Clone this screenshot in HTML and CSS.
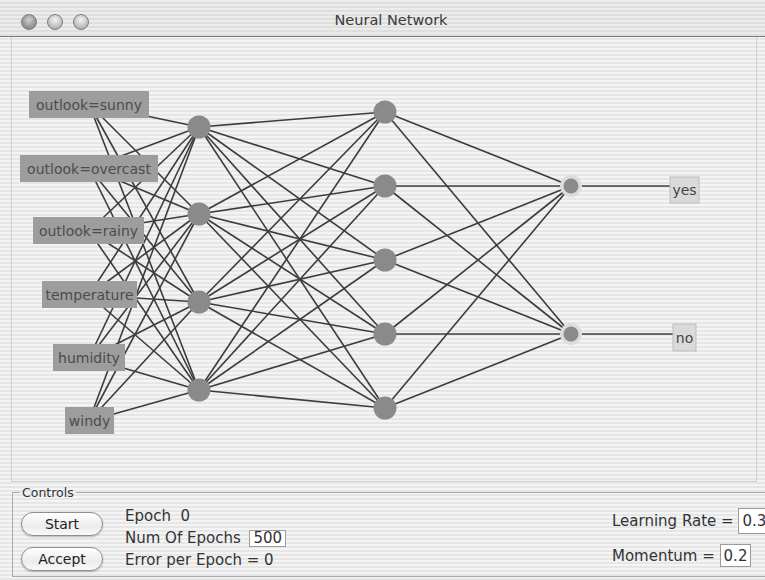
FILE: index.html
```html
<!DOCTYPE html>
<html lang="en">
<head>
    <meta charset="UTF-8">
    <title>Neural Network</title>
    <link rel="stylesheet" href="styles.css">
</head>
<body>
    <div class="window">
        <header class="titlebar">
            <div class="lights">
                <span class="light close"></span>
                <span class="light"></span>
                <span class="light"></span>
            </div>
            <h1>Neural Network</h1>
        </header>

        <div class="network">
            <svg id="net" width="746" height="445" viewBox="11 37 746 445">
                <g id="edges"></g>
                <g id="nodes"></g>
                <g id="labels"></g>
            </svg>
        </div>

        <fieldset class="controls">
            <legend>Controls</legend>
            <div class="buttons">
                <button type="button">Start</button>
                <button type="button">Accept</button>
            </div>
            <div class="stats">
                <p>Epoch&nbsp; 0</p>
                <p>Num Of Epochs <input type="text" class="epochs" value="500"></p>
                <p>Error per Epoch = 0</p>
            </div>
            <div class="params">
                <p class="rate">Learning Rate = <input type="text" class="wide" value="0.3"></p>
                <p class="momentum">Momentum = <input type="text" class="small" value="0.2"></p>
            </div>
        </fieldset>
    </div>

    <script>
        const ns = 'http://www.w3.org/2000/svg';
        const inputs = [
            { name: 'outlook=sunny', y: 104, box: [28, 91, 120, 27] },
            { name: 'outlook=overcast', y: 168, box: [19, 155, 138, 27] },
            { name: 'outlook=rainy', y: 231, box: [32, 217, 111, 27] },
            { name: 'temperature', y: 295, box: [41, 281, 95, 27] },
            { name: 'humidity', y: 358, box: [52, 344, 72, 27] },
            { name: 'windy', y: 421, box: [64, 407, 49, 27] }
        ];
        const hidden1 = [127, 214, 302, 390];
        const hidden2 = [112, 186, 260, 334, 408];
        const outputs = [
            { name: 'yes', y: 186, box: [669, 177, 29, 26] },
            { name: 'no', y: 334, box: [672, 324, 23, 27] }
        ];

        function el(tag, attrs, parent) {
            const node = document.createElementNS(ns, tag);
            for (const key in attrs) node.setAttribute(key, attrs[key]);
            document.getElementById(parent).appendChild(node);
            return node;
        }

        function line(x1, y1, x2, y2) {
            el('line', { x1, y1, x2, y2, class: 'edge' }, 'edges');
        }

        inputs.forEach(i => hidden1.forEach(h => line(88, i.y, 198, h)));
        hidden1.forEach(a => hidden2.forEach(b => line(198, a, 384, b)));
        hidden2.forEach(a => outputs.forEach(o => line(384, a, 570, o.y)));
        outputs.forEach(o => line(570, o.y, o.box[0], o.y));

        hidden1.forEach(y => el('circle', { cx: 198, cy: y, r: 11.5, class: 'node' }, 'nodes'));
        hidden2.forEach(y => el('circle', { cx: 384, cy: y, r: 11.5, class: 'node' }, 'nodes'));
        outputs.forEach(o => {
            el('circle', { cx: 570, cy: o.y, r: 11, class: 'halo' }, 'nodes');
            el('circle', { cx: 570, cy: o.y, r: 7.5, class: 'node' }, 'nodes');
        });

        function label(item, cls) {
            const [x, y, w, h] = item.box;
            el('rect', { x, y, width: w, height: h, class: cls + '-box' }, 'labels');
            const t = el('text', { x: x + w / 2, y: y + h / 2 + 5, class: cls + '-text' }, 'labels');
            t.textContent = item.name;
        }

        inputs.forEach(i => label(i, 'in'));
        outputs.forEach(o => label(o, 'out'));
    </script>
</body>
</html>
```

FILE: styles.css
```css
html, body {
    margin: 0;
    width: 765px;
    height: 580px;
    overflow: hidden;
}

body {
    font-family: 'DejaVu Sans', sans-serif;
    color: #333;
    background: repeating-linear-gradient(#f4f4f4 0, #f4f4f4 2px, #e6e6e6 2px, #e6e6e6 4px);
}

.titlebar {
    position: relative;
    height: 36px;
    border-bottom: 1px solid #7a7a7a;
    background: repeating-linear-gradient(#ececec 0, #ececec 2px, #dedede 2px, #dedede 4px);
    display: flex;
    align-items: center;
    justify-content: center;
}

.lights {
    position: absolute;
    left: 21px;
    top: 14px;
    display: flex;
    gap: 10px;
}

.light {
    width: 14px;
    height: 14px;
    border-radius: 50%;
    border: 1px solid #7c7c7c;
    background: radial-gradient(circle at 50% 35%, #f4f4f4 0, #c4c4c4 55%, #9a9a9a 100%);
}

.light.close {
    background: radial-gradient(circle at 50% 35%, #d0d0d0 0, #9a9a9a 55%, #777 100%);
}

.titlebar h1 {
    margin: 4px 0 0 17px;
    font-size: 14.5px;
    font-weight: normal;
    color: #3a3a3a;
}

.network {
    margin-left: 11px;
    width: 744px;
    height: 444px;
    border-left: 1px solid #cfcfcf;
    border-right: 1px solid #cfcfcf;
    border-bottom: 1px solid #cfcfcf;
}

.network svg {
    display: block;
}

.edge {
    stroke: #3c3c3c;
    stroke-width: 1.6;
}

.node {
    fill: #8a8a8a;
}

.halo {
    fill: #dcdcdc;
}

.in-box {
    fill: #9d9d9d;
}

.in-text {
    font-family: 'DejaVu Sans', sans-serif;
    font-size: 14px;
    fill: #4c4c4c;
    text-anchor: middle;
}

.out-box {
    fill: #dadada;
    stroke: #bdbdbd;
}

.out-text {
    font-family: 'DejaVu Sans', sans-serif;
    font-size: 14px;
    fill: #444;
    text-anchor: middle;
}

.controls {
    margin: 3px -20px 0 12px;
    padding: 12px 0 0 8px;
    height: 78px;
    border: 1px solid #ababab;
    display: flex;
    font-size: 15px;
    color: #333;
}

.controls legend {
    margin-left: -1px;
    padding: 0 2px;
    font-size: 12.5px;
    color: #333;
}

.controls p {
    margin: 0;
}

.buttons {
    display: flex;
    flex-direction: column;
    gap: 11px;
    width: 82px;
}

.buttons button {
    height: 24px;
    border: 1px solid #8e8e8e;
    border-radius: 13px;
    background: linear-gradient(#ffffff, #ececec 60%, #f8f8f8);
    font-family: 'DejaVu Sans', sans-serif;
    font-size: 14px;
    color: #222;
    box-shadow: 0 1px 2px rgba(0, 0, 0, 0.25);
}

.stats {
    margin-left: 22px;
    display: flex;
    flex-direction: column;
    gap: 2px;
    margin-top: -6px;
}

.stats p {
    height: 20px;
    line-height: 20px;
}

input {
    font-family: 'DejaVu Sans', sans-serif;
    font-size: 15px;
    color: #333;
    border: 1px solid #9c9c9c;
    background: #fff;
    padding: 0 3px;
    box-sizing: border-box;
}

.epochs {
    width: 37px;
    height: 17px;
    margin-left: 4px;
}

.params {
    margin-left: auto;
    margin-top: -4px;
    display: flex;
    flex-direction: column;
    align-items: flex-start;
    gap: 10px;
    width: 172px;
}

.rate {
    height: 26px;
    line-height: 26px;
}

.momentum {
    height: 24px;
    line-height: 24px;
}

.wide {
    width: 32px;
    height: 26px;
    vertical-align: top;
}

.small {
    width: 31px;
    height: 23px;
    vertical-align: top;
}
```
